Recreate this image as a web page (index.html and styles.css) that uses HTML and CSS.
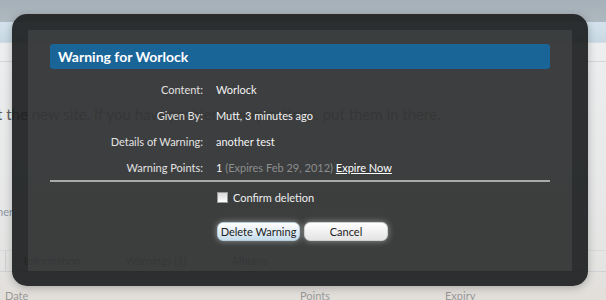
FILE: index.html
```html
<!DOCTYPE html>
<html lang="en">
<head>
    <meta charset="UTF-8">
    <title>Warning for Worlock</title>
    <link rel="stylesheet" href="styles.css">
</head>
<body>
    <div class="site">
        <div class="topbar"></div>
        <div class="navbar"></div>
        <div class="page">
            <div class="stripe"></div>
            <p class="notice">t the new site. If you have problems or questions, put them in there.</p>
            <p class="side-link">ner</p>
            <div class="tabs">
                <span class="tab tab-first"></span>
                <span class="tab">Information</span>
                <span class="tab">Warnings (1)</span>
                <span class="tab">Albums</span>
            </div>
            <div class="table-head">
                <span class="col-date">Date</span>
                <span class="col-points">Points</span>
                <span class="col-expiry">Expiry</span>
            </div>
        </div>
    </div>

    <div class="overlay">
        <div class="panel">
            <h2 class="panel-title">Warning for Worlock</h2>
            <dl class="details">
                <dt>Content:</dt>
                <dd>Worlock</dd>
                <dt>Given By:</dt>
                <dd>Mutt, 3 minutes ago</dd>
                <dt>Details of Warning:</dt>
                <dd>another test</dd>
                <dt>Warning Points:</dt>
                <dd>1 <span class="muted">(Expires Feb 29, 2012)</span> <a href="#" class="expire">Expire Now</a></dd>
            </dl>
            <label class="confirm">
                <span class="checkbox"></span>
                Confirm deletion
            </label>
            <div class="buttons">
                <button class="button primary">Delete Warning</button>
                <button class="button">Cancel</button>
            </div>
        </div>
    </div>
</body>
</html>
```

FILE: styles.css
```css
body {
    margin: 0;
    width: 606px;
    height: 300px;
    overflow: hidden;
    position: relative;
    background: #e6e7e8;
    font-family: Lato, "Liberation Sans", sans-serif;
}

/* page behind the dialog */
.topbar {
    height: 22px;
    background: linear-gradient(#a6b0b8, #aeb8bf);
}
.navbar {
    height: 20px;
    background: linear-gradient(#d3e2ec, #c8d8e3);
    border-bottom: 1px solid #d6dde2;
}
.page {
    background: linear-gradient(#eceeef, #e4e4e3 85%, #e2ded9);
    height: 257px;
}
.stripe {
    height: 18px;
    border-bottom: 1px solid #d3d6d8;
}
.notice {
    margin: 0;
    padding-top: 43px;
    font-size: 15px;
    color: #5e5e5e;
    white-space: nowrap;
    text-indent: -3px;
}
.side-link {
    margin: 82px 0 0;
    font-size: 11px;
    color: #8896a4;
    text-indent: -3px;
}
.tabs {
    display: flex;
    margin-top: 32px;
    height: 20px;
    border-top: 1px solid #d7d9db;
    border-bottom: 1px solid #cfd2d4;
}
.tab {
    padding: 0 26px 0 18px;
    font-size: 11px;
    line-height: 20px;
    color: #555;
    border-right: 1px solid #cfd2d4;
}
.tab-first {
    padding: 0;
    width: 5px;
}
.table-head {
    display: flex;
    margin-top: 17px;
    font-size: 11px;
    color: #999;
}
.col-date { margin-left: 5px; width: 295px; }
.col-points { width: 145px; }

/* dialog */
.overlay {
    position: absolute;
    top: 14px;
    left: 12px;
    width: 576px;
    height: 272px;
    box-sizing: border-box;
    padding: 16px 16px 15px;
    border-radius: 15px;
    background: rgba(28, 30, 32, 0.92);
    box-shadow: 0 2px 8px rgba(0, 0, 0, 0.25);
}
.panel {
    height: 100%;
    padding: 14px 22px 0;
    box-sizing: border-box;
    background: rgba(96, 96, 96, 0.32);
    color: #f2f2f2;
}
.panel-title {
    margin: 0;
    height: 25px;
    padding-left: 8px;
    border-radius: 3px;
    background: #1a6598;
    color: #fff;
    font-size: 14px;
    font-weight: bold;
    line-height: 26px;
}
.details {
    display: grid;
    grid-template-columns: 153px 1fr;
    column-gap: 13px;
    grid-auto-rows: 26px;
    align-items: center;
    margin: 7px 0 0;
    border-bottom: 2px solid #a9a9a9;
    font-size: 11px;
}
.details dt {
    text-align: right;
    color: #e2e2e2;
}
.details dd {
    margin: 0;
    color: #f4f4f4;
}
.muted {
    color: #8e8e8e;
}
.expire {
    color: #fff;
    text-decoration: underline;
}
.confirm {
    display: flex;
    align-items: center;
    gap: 5px;
    height: 20px;
    margin: 5px 0 0 167px;
    font-size: 11px;
    color: #eee;
}
.checkbox {
    width: 9px;
    height: 9px;
    border: 1px solid #9a9a9a;
    background: linear-gradient(#d8d8d8, #ffffff);
}
.buttons {
    display: flex;
    gap: 4px;
    margin: 15px 0 0 167px;
}
.button {
    width: 84px;
    height: 19px;
    padding: 0;
    border: 1px solid #cfcfcf;
    border-radius: 6px;
    background: linear-gradient(#ffffff, #e4e4e4);
    box-shadow: 0 0 6px rgba(255, 255, 255, 0.45);
    font-family: Lato, "Liberation Sans", sans-serif;
    font-size: 11px;
    color: #222;
}
.button.primary {
    width: 83px;
    background: linear-gradient(#ffffff, #c6dcec);
    border-color: #b6cbd9;
}
```
